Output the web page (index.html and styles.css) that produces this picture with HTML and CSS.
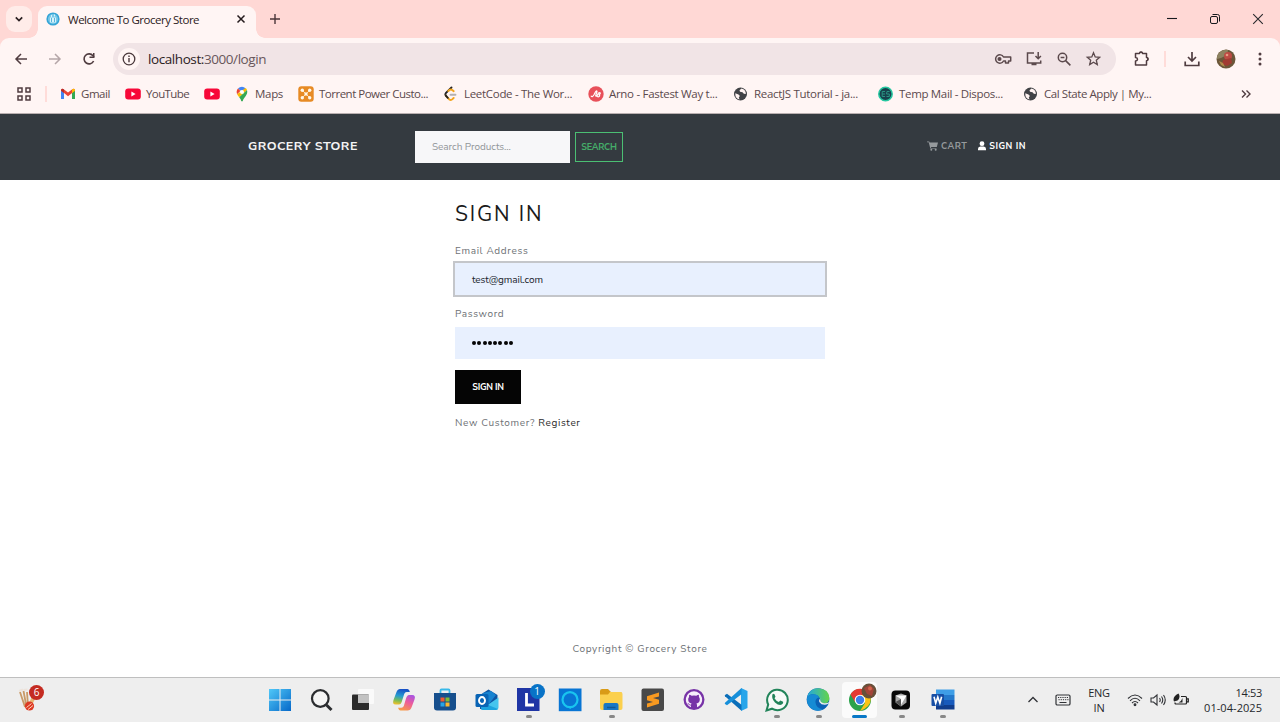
FILE: index.html
```html
<!DOCTYPE html>
<html lang="en">
<head>
<meta charset="utf-8">
<title>Welcome To Grocery Store</title>
<link rel="stylesheet" href="styles.css">
</head>
<body>
<div class="tabstrip">
  <div class="tab-search"><svg width="10" height="10" viewBox="0 0 10 10"><path d="M1.800 3.300 5 6.500l3.200-3.200" fill="none" stroke="#2b2022" stroke-width="1.700"/></svg></div>
  <div class="tab">
    <svg width="14" height="14" viewBox="0 0 14 14"><circle cx="7" cy="7" r="6.600" fill="#35a4d6"/><circle cx="7" cy="7" r="5" fill="#78c8e8"/><path d="M4 5.500h6v5H4zM5 3h1v2H5zM8 2.500h1v2H8z" fill="#d7f1fa"/><path d="M5.500 6v4M8.500 6v4" stroke="#58b6dc"/></svg>
    <span class="tab-title">Welcome To Grocery Store</span>
    <svg class="tab-close" width="10" height="10" viewBox="0 0 10 10"><path d="m1.500 1.500 7 7m0-7-7 7" stroke="#241b1d" stroke-width="1.500"/></svg>
  </div>
  <svg class="new-tab" width="12" height="12" viewBox="0 0 12 12"><path d="M6 1v10M1 6h10" stroke="#4b3639" stroke-width="1.400"/></svg>
  <div class="window-buttons">
    <svg width="12" height="12" viewBox="0 0 12 12"><path d="M1 5.500h10" stroke="#17191d" stroke-width="1.100"/></svg>
    <svg width="12" height="12" viewBox="0 0 12 12" fill="none" stroke="#17191d"><rect x="1.500" y="3.500" width="7" height="7" rx="1.500"/><path d="M3.500 1.500h5a2 2 0 0 1 2 2v5"/></svg>
    <svg width="12" height="12" viewBox="0 0 12 12"><path d="m1.200 1.200 9.600 9.600m0-9.600-9.600 9.600" stroke="#29292d" stroke-width="1.100"/></svg>
  </div>
</div>
<div class="toolbar-back">
<div class="toolbar">
  <svg class="nav" width="14" height="14" viewBox="0 0 14 14"><path d="M13 7H2m5-5L2 7l5 5" fill="none" stroke="#503c40" stroke-width="1.500"/></svg>
  <svg class="nav" width="14" height="14" viewBox="0 0 14 14"><path d="M1 7h11M7 2l5 5-5 5" fill="none" stroke="#b5a6a8" stroke-width="1.500"/></svg>
  <svg class="nav" width="14" height="14" viewBox="0 0 14 14"><path d="M11.600 9A5 5 0 1 1 11 3.800L12 5" fill="none" stroke="#503c40" stroke-width="1.600"/><path d="M12.500 1v5h-5V4.500H11V1z" fill="#503c40"/></svg>
  <div class="omnibox">
    <div class="site-info"><svg width="14" height="14" viewBox="0 0 14 14"><circle cx="7" cy="7" r="5.800" fill="none" stroke="#4a393c" stroke-width="1.300"/><path d="M7 6v4.200M7 3.600V5" stroke="#4a393c" stroke-width="1.400"/></svg></div>
    <span class="url"><b>localhost:</b>3000/login</span>
    <div class="omni-icons">
      <svg width="18" height="16" viewBox="0 0 18 16" fill="none" stroke="#5b494c" stroke-width="1.500"><path d="M9.500 6A4.200 4.200 0 1 0 9.500 10h2v2h3v-2h2.200V6z" stroke-linejoin="round"/><circle cx="5.500" cy="8" r="1.300" fill="#5b494c"/></svg>
      <svg width="18" height="16" viewBox="0 0 18 16" fill="none" stroke="#5b494c" stroke-width="1.500"><path d="M9 2H2.500v10h13.200V9.500M6.500 13.500h5"/><path d="M13.200 1v6.500M10.500 5l2.700 2.700L15.900 5"/></svg>
      <svg width="16" height="16" viewBox="0 0 16 16" fill="none" stroke="#5b494c" stroke-width="1.500"><circle cx="6.500" cy="6.500" r="4.200"/><path d="m9.600 9.600 4.800 4.800M4.600 6.500h3.800"/></svg>
      <svg width="16" height="16" viewBox="0 0 16 16" fill="none" stroke="#5b494c" stroke-width="1.300"><path d="m8.500 1.800 1.700 4.100 4.500.4-3.400 2.900 1 4.400-3.800-2.300-3.800 2.300 1-4.400-3.400-2.900 4.500-.4z"/></svg>
    </div>
  </div>
  <div class="actions">
    <svg width="18" height="18" viewBox="0 0 18 18"><path d="M2.500 3.500h4a1.500 1.500 0 0 1 3 0h4v4a1.600 1.600 0 0 1 0 3.200v4.300h-11v-4q2-.2 2-1.800t-2-1.800z" fill="none" stroke="#503c40" stroke-width="1.500" stroke-linejoin="round"/><path d="M6.500 3a1.500 1.500 0 0 1 3 0M14 7.500a1.600 1.600 0 0 1 0 3.200" fill="#503c40"/></svg>
    <i class="divider"></i>
    <svg width="18" height="18" viewBox="0 0 18 18"><path d="M9 2v9M5 7l4 4 4-4M2.200 11.500v4h13.600v-4" fill="none" stroke="#503c40" stroke-width="1.700"/></svg>
    <svg class="avatar" width="20" height="20" viewBox="0 0 20 20"><circle cx="10" cy="10" r="9.500" fill="#6b5639"/><path d="M3 4q4-4 9-3l-1 5-6 3-4 1q0-4 2-6z" fill="#8d8260"/><circle cx="12" cy="7" r="4" fill="#bd4a43"/><path d="m7 11 8-2 1 5-5 3-5-2z" fill="#a13b32"/><path d="m3 12 4 2 2 4-4-2z" fill="#b18c4b"/><circle cx="11" cy="6" r="1.300" fill="#e69b80"/></svg>
    <svg width="4" height="16" viewBox="0 0 4 16" fill="#503c40"><circle cx="2" cy="3" r="1.500"/><circle cx="2" cy="8" r="1.500"/><circle cx="2" cy="13" r="1.500"/></svg>
  </div>
</div>
</div>
<div class="bookmarks">
  <svg class="apps" width="14" height="14" viewBox="0 0 14 14" fill="none" stroke="#503c40" stroke-width="1.500"><path d="M1 1h4v4H1zM9 1h4v4H9zM1 9h4v4H1zM9 9h4v4H9z"/></svg>
  <i class="divider"></i>
  <div class="bm bm-gmail"><svg width="16" height="16" viewBox="0 0 16 16"><path d="M1 4v9h3V7z" fill="#4285f4"/><path d="M12 7v6h3V4z" fill="#34a853"/><path d="M1 4.500V4q.8-2 2.700-.8L8 6.400l4.300-3.200Q14.200 2 15 4v.8l-7 5.400z" fill="#ea4335"/><path d="M12 3.400V7l3-2.200V4q-.8-2-3-.6z" fill="#fbbc04"/><path d="M1 4v.8L4 7V3.400Q1.800 2 1 4z" fill="#b92c28"/></svg><span>Gmail</span></div>
  <div class="bm bm-youtube"><svg width="16" height="16" viewBox="0 0 16 16"><rect x=".2" y="2.500" width="15.600" height="11" rx="3" fill="#f70838"/><path d="m6.400 5.600 4.200 2.400-4.200 2.400z" fill="#fff"/></svg><span>YouTube</span></div>
  <div class="bm bm-tube"><svg width="16" height="16" viewBox="0 0 16 16"><rect x=".2" y="2.500" width="15.600" height="11" rx="3" fill="#f70838"/><path d="m6.400 5.600 4.200 2.400-4.200 2.400z" fill="#fff"/></svg></div>
  <div class="bm bm-maps"><svg width="14" height="16" viewBox="0 0 14 16"><path d="M7 .8a5.300 5.300 0 0 0-4 1.800L7 6l3.500-3.700A5 5 0 0 0 7 .8z" fill="#4285f4"/><path d="M3 2.600Q.8 5 2.100 8.300L5.400 5z" fill="#ea4335"/><path d="M2.100 8.300Q3 10 4.200 11.200L12 3.900q-.5-1.100-1.500-1.900z" fill="#fbbc04"/><path d="M4.200 11.200Q6 13 6.300 15.200h1.400C8.200 11.500 13.500 9 12 3.900z" fill="#34a853"/><circle cx="7" cy="6" r="2" fill="#fff"/></svg><span>Maps</span></div>
  <div class="bm bm-torrent"><svg width="16" height="16" viewBox="0 0 16 16"><rect x=".3" y=".3" width="15.400" height="15.400" rx="3" fill="#e78a24"/><path d="m4.300 4.300 7.400 7.400m0-7.400-7.400 7.400" stroke="#ffdfad"/><g fill="#fff7e8"><circle cx="4.300" cy="4.300" r="1.700"/><circle cx="11.700" cy="4.300" r="1.700"/><circle cx="8" cy="8" r="1.700"/><circle cx="4.300" cy="11.700" r="1.700"/><circle cx="11.700" cy="11.700" r="1.700"/></g></svg><span>Torrent Power Custo...</span></div>
  <div class="bm bm-leet"><svg width="16" height="16" viewBox="0 0 16 16" fill="none" stroke-linecap="round" stroke-width="1.900"><path d="M8.500 1.500 2.800 7.200q-1 1.200 0 2.400" stroke="#222"/><path d="m2.800 9.600 3.300 3.600q1.800 1.600 3.400 0l1.200-1.300M5.300 5l1-1q1.700-1.200 3.300.2l1.100 1" stroke="#f3a51d"/><path d="m2.800 9.600 2 2.200" stroke="#222"/><path d="M7.500 8.700h5" stroke="#b4b0b0"/></svg><span>LeetCode - The Wor...</span></div>
  <div class="bm bm-arno"><svg width="16" height="16" viewBox="0 0 16 16"><circle cx="8" cy="8" r="7.700" fill="#e8505a"/><path d="M3.200 10.200q1.200 1.200 2.800-1.400l1.300-2.500Q8.500 4 9 5.500L7.700 9.500q0 1.500 1.500 0l1.300-2.500q2.200-.9 1.700.7-.8 1.200-1.700 1 2 .6.600 1.900-1 .7-1.900-.2" fill="none" stroke="#fff" stroke-width="1.200" stroke-linecap="round"/></svg><span>Arno - Fastest Way t...</span></div>
  <div class="bm bm-react"><svg width="16" height="16" viewBox="0 0 16 16"><circle cx="7.500" cy="8" r="6.500" fill="#414246"/><path d="M2.300 7.200 5.500 8.500 7 10l-1.200 1.200.7 2.200Q2 12.500 2.300 7.200zM8.500 2.500 6.500 4.200l.5 1.600 2.500.4 1.300 1.600 2 .2Q13 3.500 8.500 2.500z" fill="#fff3f2"/></svg><span>ReactJS Tutorial - ja...</span></div>
  <div class="bm bm-temp"><svg width="16" height="16" viewBox="0 0 16 16"><circle cx="7.500" cy="8" r="6.700" fill="#17424d" stroke="#25c7a0" stroke-width="1.500"/><path d="M7 5.500H4.200v5H7M4.200 8H7M11.500 5.500H9L8.500 8h2.800v2.500H8.500" fill="none" stroke="#299382"/></svg><span>Temp Mail - Dispos...</span></div>
  <div class="bm bm-cal"><svg width="16" height="16" viewBox="0 0 16 16"><circle cx="7.500" cy="8" r="6.500" fill="#414246"/><path d="M2.300 7.200 5.500 8.500 7 10l-1.200 1.200.7 2.200Q2 12.500 2.300 7.200zM8.500 2.500 6.500 4.200l.5 1.600 2.500.4 1.300 1.600 2 .2Q13 3.500 8.500 2.500z" fill="#fff3f2"/></svg><span>Cal State Apply | My...</span></div>
  <svg class="more" width="10" height="10" viewBox="0 0 10 10"><path d="m1 1.500 3.500 3.500L1 8.500m4.500-7L9 5 5.500 8.500" fill="none" stroke="#503c40" stroke-width="1.400"/></svg>
</div>

<header class="site-header">
  <span class="brand">GROCERY STORE</span>
  <span class="search-input">Search Products...</span>
  <span class="search-button">SEARCH</span>
  <nav class="site-nav">
    <span class="cart"><svg width="11" height="10" viewBox="0 0 11 10"><path d="M0 .4h2.200l.4 1.200H11L9.800 6H4l.2.900h5.300v.7H3.300L1.700 1.300H0z" fill="#969a9d"/><circle cx="4.300" cy="8.800" r="1" fill="#969a9d"/><circle cx="8.700" cy="8.800" r="1" fill="#969a9d"/></svg><b>CART</b></span>
    <span class="user"><svg width="8" height="10" viewBox="0 0 8 10"><circle cx="4" cy="2.700" r="2.400" fill="#fff"/><path d="M0 9.300V8q0-2.300 2.300-2.500h3.400Q8 5.700 8 8v1.300z" fill="#fff"/></svg><b>SIGN IN</b></span>
  </nav>
</header>

<main class="page">
  <div class="form">
    <h1>SIGN IN</h1>
    <label class="label-email">Email Address</label>
    <div class="field focused"><span class="mail">test@gmail.com</span></div>
    <label class="label-pass">Password</label>
    <div class="field"><span class="dots"><i></i><i></i><i></i><i></i><i></i><i></i><i></i><i></i></span></div>
    <div class="submit"><span>SIGN IN</span></div>
    <p class="register">New Customer? <a>Register</a></p>
  </div>
  <footer>Copyright © Grocery Store</footer>
</main>

<div class="taskbar">
  <div class="widget">
    <svg width="24" height="28" viewBox="0 0 24 28"><path d="m4 6 5 15M7.500 5l3 16M11 6l1 14" stroke="#c99a67" stroke-width="1.800"/><path d="m3 5 4-1.500M7.500 4l4-.5" stroke="#ede4dc" stroke-width="2"/><path d="m21 9-6 12-2.800-2L17 8z" fill="#e8b674"/><circle cx="13.500" cy="20" r="4.600" fill="#dc3a24"/><path d="m10.500 21.500 5-4m-3.500 6 5-4" stroke="#ffd0b8"/></svg>
    <span class="badge red">6</span>
  </div>
  <div class="apps-row">
    <div class="app"><svg width="24" height="24" viewBox="0 0 24 24"><defs><linearGradient id="win" x2="1" y2="1"><stop stop-color="#50c8f8"/><stop offset="1" stop-color="#0668c8"/></linearGradient></defs><path d="M1 1h10.500v10.500H1zM12.500 1H23v10.500H12.500zM1 12.500h10.500V23H1zM12.500 12.500H23V23H12.500z" fill="url(#win)"/></svg></div>
    <div class="app"><svg width="24" height="24" viewBox="0 0 24 24"><circle cx="11.300" cy="10.500" r="8.300" fill="#f5f5f5" stroke="#2b2d30" stroke-width="2.200"/><path d="m17.500 17 5 5" stroke="#2b2d30" stroke-width="3"/></svg></div>
    <div class="app"><svg width="24" height="24" viewBox="0 0 24 24"><rect x="7" y="1" width="16" height="15" rx="1" fill="#fafafa"/><rect x="1" y="6.500" width="17" height="15.500" rx="1" fill="#2b2b2b"/><path d="M7 6.500h11V15H7z" fill="#c2c2c2"/></svg></div>
    <div class="app"><svg width="24" height="24" viewBox="0 0 24 24"><defs><linearGradient id="cop1" x1=".5" x2=".3" y2="1"><stop stop-color="#164fc5"/><stop offset=".45" stop-color="#259bd1"/><stop offset=".75" stop-color="#79bd57"/><stop offset="1" stop-color="#f0bf2b"/></linearGradient><linearGradient id="cop2" x1=".8" x2=".3" y2="1"><stop stop-color="#a854e2"/><stop offset=".45" stop-color="#ec5b9c"/><stop offset="1" stop-color="#f89b47"/></linearGradient></defs><path d="M15.500 1H8Q5.500 1 4.300 4.500L1.500 12q-1.500 4.500 2.300 4.500H7q2 0 3-3.500l2.200-7q.6-2 2.500-2h3.200Q17.200 1 15.500 1z" fill="url(#cop1)"/><path d="M8.500 22.500h7q3 0 4.200-3.500l2.800-7.500Q24 7 20.200 7H17q-2 0-3 3.500L11.800 18q-.6 1.800-2.500 1.800H6q.7 2.700 2.500 2.700z" fill="url(#cop2)"/></svg></div>
    <div class="app"><svg width="24" height="24" viewBox="0 0 24 24"><path d="M7.500 5V2.500q0-1 1-1h7q1 0 1 1V5" fill="none" stroke="#38b9e9" stroke-width="1.800"/><path d="M1 5h22v14.500q0 3-3 3H4q-3 0-3-3z" fill="#164f8d"/><path d="M7.500 9.500h4v4h-4z" fill="#ec5a32"/><path d="M12.500 9.500h4v4h-4z" fill="#7cbb35"/><path d="M7.500 14.500h4v4h-4z" fill="#28a4e5"/><path d="M12.500 14.500h4v4h-4z" fill="#fab72e"/></svg></div>
    <div class="app"><svg width="24" height="24" viewBox="0 0 24 24"><path d="m5 7 8.500-5.500L22.500 7v14H5z" fill="#0d54a2"/><path d="m8 5 8-2 5 4-7 9-6-4z" fill="#1683d1"/><path d="M6 21.500 23.500 9.500V19q0 3-3 3H8q-2 0-2-.5z" fill="#45c5ee"/><path d="m6 14 17 7q-1 1-2.500 1H8q-2 0-2-2z" fill="#1ca4df"/><rect x=".5" y="6" width="13" height="13" rx="1.500" fill="#0964b5"/><ellipse cx="7" cy="12.500" rx="3" ry="3.500" fill="none" stroke="#fff" stroke-width="1.900"/></svg></div>
    <div class="app running"><svg width="24" height="24" viewBox="0 0 24 24"><path d="M1 0h22.500v23H1z" fill="#1f35a5"/><path d="M10.500 5v12H18" fill="none" stroke="#fff" stroke-width="2.800"/></svg><span class="badge blue">1</span></div>
    <div class="app"><svg width="24" height="24" viewBox="0 0 24 24"><path d="M.8.500h22.700v22.700H.8z" fill="#0875d4"/><circle cx="12" cy="11.700" r="7.500" fill="none" stroke="#19c5ef" stroke-width="2.200"/><path d="m10 18 5 1-3 2z" fill="#19c5ef"/></svg></div>
    <div class="app running"><svg width="24" height="24" viewBox="0 0 24 24"><path d="M1 3q0-2 2-2h6l3 3h9q2 0 2 2v4H1z" fill="#d99b17"/><path d="M1 6.500h8l2-2.500h10.500Q23.500 4 23.500 6v14q0 2-2 2H3q-2 0-2-2z" fill="#fbd04e"/><path d="M4.500 22v-5q0-2 2-2h11q2 0 2 2v5z" fill="#1977c6"/><path d="M8 19.500h8.500" stroke="#115895" stroke-width="1.500"/></svg></div>
    <div class="app"><svg width="24" height="24" viewBox="0 0 24 24"><rect x=".5" y=".5" width="22.500" height="22.500" rx="2" fill="#494949"/><path d="M18 4.500 6 8.300v4L12 14l-6 1.500v4l12-3.800v-4L12 10l6-1.600z" fill="#f99a20"/></svg></div>
    <div class="app"><svg width="24" height="24" viewBox="0 0 24 24"><circle cx="12" cy="11.500" r="9.200" fill="#7733a7" stroke="#7733a7" stroke-width="2.600"/><path d="M12 3.200a8.300 8.300 0 0 0-3 16v-1.700q-2 .3-2.800-1.400l-.8-1q1-.2 1.800 1.200.7.700 1.900.3.100-.7.500-1Q6.200 15 6.200 11.300q0-1.300.9-2.300-.3-1.200.2-2.300 1.100 0 2.400 1 2.300-.6 4.600 0 1.300-1 2.400-1 .5 1.100.2 2.300.9 1 .9 2.300 0 3.700-3.400 4.300.6.600.6 1.600v2a8.300 8.300 0 0 0-3-16z" fill="#f7edfb"/></svg></div>
    <div class="app"><svg width="24" height="24" viewBox="0 0 24 24"><path d="m17 0 6.500 3v17L17 23z" fill="#27a5ea"/><path d="m3 5.800 14.500 11v6L1 8.200q-.5-.8 0-1.300z" fill="#0a6eb9"/><path d="m3 17.200 14.500-11V0L1 14.800q-.5.800 0 1.300z" fill="#168fda"/></svg></div>
    <div class="app running"><svg width="24" height="24" viewBox="0 0 24 24"><path d="m1.500 22.500 1.700-6A10.300 10.300 0 1 1 7 20.700z" fill="#f7faf8" stroke="#22845a" stroke-width="2"/><path d="M7.500 6.300q1-1 2 0l1 2.500-1 1.500q1.500 2.700 4.300 3.700l1.500-1.500 2.800 1.200q.5 2.500-2.800 3.300-2.500 0-5.300-2.500Q6 10.500 7.500 6.300z" fill="#22845a"/></svg></div>
    <div class="app running"><svg width="24" height="24" viewBox="0 0 24 24"><defs><linearGradient id="edg"><stop stop-color="#23a8df"/><stop offset="1" stop-color="#64d449"/></linearGradient></defs><circle cx="12" cy="11.500" r="11.300" fill="#0b62b5"/><path d="M1 10Q3 0 12.500.2 23 1 23.400 10q-.3 5.800-6 5.500-4-.4-3-3.500Q13 6.500 7 6.300 2.500 6.500 1 10z" fill="url(#edg)"/><path d="M1 10Q3 6 7.500 6.300q5 .3 5.500 3.200-4 1-3.500 5 .5 6 7.500 6.800Q10 25 4 19.500.3 15.500 1 10z" fill="#168bd4"/><path d="M14.300 10.500q-2 1.500-.8 3.700 1.800 2.800 5.500 2.600 2.300-.2 4-1.500l1.500 1V13q-3.500 3-7.500 2-3.500-1-2.700-4.500z" fill="#eee"/></svg></div>
    <div class="app active"><svg width="24" height="24" viewBox="0 0 24 24"><circle cx="12" cy="12" r="11" fill="#2ba24c"/><path d="M2.500 6.500A11 11 0 0 1 22 7H12l-5 7z" fill="#e53a31"/><path d="M12 7h10Q25.500 18 12 23l5-8z" fill="#fbc316"/><circle cx="12" cy="12" r="5.300" fill="#fff"/><circle cx="12" cy="12" r="4.200" fill="#3d7eea"/></svg><svg class="profile" width="16" height="16" viewBox="0 0 16 16"><circle cx="8" cy="8" r="7.500" fill="#685039"/><path d="m3 5 6-3 4 4-2 7-5-2z" fill="#a44539"/><circle cx="9" cy="5.500" r="2" fill="#d4664e"/></svg></div>
    <div class="app running"><svg width="24" height="24" viewBox="0 0 24 24"><rect x="2.500" y="2.500" width="18.500" height="19" rx="4" fill="#090909"/><path d="m6.500 7.500 5.500-2 5.500 2v7L12 18.500l-5.500-4z" fill="#aaa"/><path d="M6.500 7.500h11L12 17v-6z" fill="#fff"/><path d="m6.500 14 5.500-3v7.500z" fill="#555"/></svg></div>
    <div class="app running"><svg width="24" height="24" viewBox="0 0 24 24"><path d="M5 1.500h18.500V7H5z" fill="#3e9ee7"/><path d="M5 7h18.500v5H5z" fill="#2479cc"/><path d="M5 12h18.500v5H5z" fill="#185abc"/><path d="M5 17h18.500v4.500H5z" fill="#113d8c"/><rect x=".5" y="6" width="12.500" height="12" rx="1" fill="#174fa5"/><path d="m3 8.800 1.700 6.400L6.800 9l2.100 6.200 1.700-6.400" fill="none" stroke="#fff" stroke-width="1.600"/></svg></div>
  </div>
  <div class="tray">
    <svg width="12" height="12" viewBox="0 0 12 12"><path d="m1.500 8 4.500-4.500L10.500 8" fill="none" stroke="#303236" stroke-width="1.300"/></svg>
    <svg class="kbd" width="16" height="12" viewBox="0 0 16 12"><rect x="1" y="1" width="14" height="10" rx="1.300" fill="none" stroke="#303236" stroke-width="1.200"/><path d="M3 3.500h10M3.500 5.700h10" stroke="#303236" stroke-dasharray="1.200 1"/><path d="M4.500 8.500h7" stroke="#303236"/></svg>
    <span class="lang">ENG<br>IN</span>
    <svg class="wifi" width="16" height="14" viewBox="0 0 16 14" fill="none" stroke="#303236" stroke-width="1.100"><path d="M1 5.500q7-7 14 0M3 7.800q5-5 10 0M5 10q3-3 6 0"/><circle cx="8" cy="11.800" r=".9" fill="#303236"/></svg>
    <svg class="vol" width="16" height="14" viewBox="0 0 16 14" fill="none" stroke="#303236" stroke-width="1.100"><path d="M1 5h2.500L7 2v10L3.500 9H1zM9.500 5q1.500 2 0 4M11.500 3.500q2.500 3.500 0 7M13.500 2q3.500 5 0 10"/></svg>
    <svg class="batt" width="16" height="14" viewBox="0 0 16 14"><path d="M8 3.500h4.500q1 0 1 1v5.500q0 1-1 1H3q-1 0-1-1V9.500M14 5.800h1.300v3H14" fill="none" stroke="#222" stroke-width="1.200"/><path d="M5.500.5Q8 4.500 4.500 7.500L1 8.500Q-1 4 5.500.5zM9.500 5v4.500H5.500q3-1 4-4.500z" fill="#222"/></svg>
    <span class="clock">14:53<br><span class="date">01-04-2025</span></span>
  </div>
</div>
</body>
</html>
```
FILE: styles.css
```css
* { box-sizing: border-box; }
body { margin: 0; width: 1280px; height: 722px; overflow: hidden; display: flex; flex-direction: column; background: #fff; font-family: "Segoe UI", "Open Sans", "Noto Sans", sans-serif; font-size: 12px; color: #5b494c; }
svg { display: block; flex: none; }
span { white-space: nowrap; }

.tabstrip { height: 38px; flex: none; display: flex; align-items: center; background: #ffd8d5; padding-left: 6px; }
.tab-search { width: 26px; height: 26px; border-radius: 9px; background: #ffece9; display: flex; align-items: center; justify-content: center; }
.tab { position: relative; width: 218px; height: 32px; margin: 6px 0 0 6px; padding: 0 10px 6px 8px; border-radius: 9px 9px 0 0; background: #fff5f4; display: flex; align-items: center; color: #2b2022; }
.tab::before, .tab::after { content: ""; position: absolute; bottom: 0; width: 9px; height: 9px; }
.tab::before { left: -9px; background: radial-gradient(circle at 0 0, transparent 8.5px, #fff5f4 9px); }
.tab::after { right: -9px; background: radial-gradient(circle at 100% 0, transparent 8.5px, #fff5f4 9px); }
.tab-title { margin-left: 8px; letter-spacing: -.48px; font-size: 11.500px; }
.tab-close { margin-left: auto; }
.new-tab { margin-left: 13px; }
.window-buttons { margin-left: auto; display: flex; gap: 31px; padding-right: 16px; }

.toolbar-back { background: #ffd8d5; flex: none; }
.toolbar { height: 41px; display: flex; align-items: center; padding: 1px 0 0 14px; border-radius: 9px 9px 0 0; background: #fff5f4; }
.nav { margin-right: 20px; }
.omnibox { width: 1003px; height: 32px; margin-left: -3px; border-radius: 16px; background: #f1e4e6; display: flex; align-items: center; padding: 0 15px 0 5px; }
.site-info { width: 22px; height: 22px; border-radius: 50%; background: #fff5f4; display: flex; align-items: center; justify-content: center; }
.url { margin-left: 8px; font-size: 13.500px; letter-spacing: -.42px; color: #68565a; }
.url b { font-weight: 400; color: #2b2022; }
.omni-icons { margin-left: auto; display: flex; align-items: center; gap: 13px; }
.actions { flex: 1; display: flex; align-items: center; padding-left: 17px; }
.divider { display: block; width: 2px; height: 16px; background: #ffdcd9; }
.actions .divider { margin: 0 17px 0 13px; }
.actions .avatar { margin: 0 22px 0 15px; }

.bookmarks { height: 35px; flex: none; display: flex; align-items: center; background: #fff5f4; padding: 0 29px 5px 17px; border-bottom: 1px solid #b9afb0; }
.bookmarks .divider { margin: 0 13px 0 14px; }
.bm { display: flex; align-items: center; width: 145px; gap: 5px; font-size: 11.500px; letter-spacing: -.3px; }
.bm span { padding-bottom: 1px; }
.bm-gmail { width: 65px; letter-spacing: -.45px; }
.bm-youtube { width: 79px; letter-spacing: -.6px; }
.bm-tube { width: 31px; }
.bm-maps { width: 63px; gap: 6px; }
.bm-torrent { letter-spacing: -.5px; }
.bm-temp { letter-spacing: -.33px; }
.bm-cal { letter-spacing: -.44px; }
.more { margin-left: auto; }

.site-header { height: 66px; flex: none; background: #343a40; display: flex; align-items: center; padding: 0 254px 0 248px; font-family: "Nunito Sans", Nunito, Lato, sans-serif; }
.brand { width: 167px; color: #f4f4f5; font-size: 12.500px; font-weight: 700; letter-spacing: .46px; padding-bottom: 3px; }
.search-input { width: 155px; height: 32px; background: #f7f7f9; color: #929699; font-size: 10px; line-height: 32px; padding-left: 17px; letter-spacing: -.05px; }
.search-button { width: 48px; height: 30px; margin-left: 5px; border: 1px solid #4bbf73; color: #45ad69; font-size: 9px; font-weight: 700; letter-spacing: -.25px; line-height: 29px; text-align: center; }
.site-nav { margin-left: auto; display: flex; gap: 11px; font-size: 9px; letter-spacing: .5px; padding-bottom: 2px; color: #969a9d; }
.cart, .user { display: flex; align-items: center; gap: 3px; }
.user { color: #fff; }

.page { flex: 1; display: flex; flex-direction: column; align-items: center; font-family: "Nunito Sans", Nunito, Lato, sans-serif; font-size: 10px; color: #6e7276; letter-spacing: .65px; }
.form { width: 370px; display: flex; flex-direction: column; align-items: flex-start; }
.form h1 { margin: 20px 0 0; font-size: 21px; line-height: 28px; font-weight: 400; letter-spacing: 1.850px; color: #1a1a1a; }
.form label { line-height: 16px; }
.label-email { margin-top: 15px; }
.label-pass { margin-top: 11px; }
.field { width: 370px; height: 32px; margin-top: 5px; padding-left: 17px; background: #e8f0fe; display: flex; align-items: center; letter-spacing: -.1px; color: #20242c; }
.focused { margin-top: 4px; padding-top: 1px; box-shadow: 0 0 0 2px #c4c6ca; }
.dots { display: flex; gap: 1.300px; }
.dots i { width: 4px; height: 4px; border-radius: 50%; background: #050505; }
.submit { width: 66px; height: 34px; margin-top: 11px; background: #050505; color: #fff; font-size: 9px; font-weight: 700; letter-spacing: -.25px; display: flex; align-items: center; justify-content: center; }
.register { margin: 11px 0 0; line-height: 16px; }
.register a { color: #2b2b2b; }
.page footer { margin-top: auto; padding-bottom: 20px; line-height: 16px; }

.taskbar { height: 45px; flex: none; display: flex; align-items: center; background: #eee; border-top: 1px solid #bfbfbf; color: #25282c; }
.widget { position: relative; width: 243px; padding-left: 16px; margin-right: 16px; }
.badge { position: absolute; width: 15px; height: 15px; border-radius: 50%; color: #fff; font-size: 10px; line-height: 15px; text-align: center; }
.red { left: 29px; top: -1px; background: #c42b21; }
.blue { left: 22px; top: 6px; background: #0873c7; }
.apps-row { display: flex; height: 44px; }
.app { position: relative; width: 41.450px; display: flex; align-items: center; justify-content: center; }
.running::after, .active::after { content: ""; position: absolute; left: 18px; bottom: 4px; width: 6px; height: 3px; border-radius: 2px; background: #888; }
.active::before { content: ""; position: absolute; left: 3px; top: 4px; width: 35px; height: 36px; border-radius: 4px; background: #fbfbfb; }
.active svg { position: relative; }
.active::after { left: 13px; width: 15px; background: #0878c7; }
.active .profile { position: absolute; right: 4px; top: 5px; }
.tray { flex: 1; display: flex; align-items: center; justify-content: flex-end; padding-right: 18px; font-size: 11px; line-height: 15px; letter-spacing: -.3px; }
.kbd { margin-left: 16px; }
.lang { margin-left: 16px; width: 24px; text-align: center; }
.wifi { margin-left: 16px; }
.vol { margin-left: 7px; }
.batt { margin-left: 7px; }
.clock { width: 73px; text-align: right; }
.date { letter-spacing: .05px; }
```
